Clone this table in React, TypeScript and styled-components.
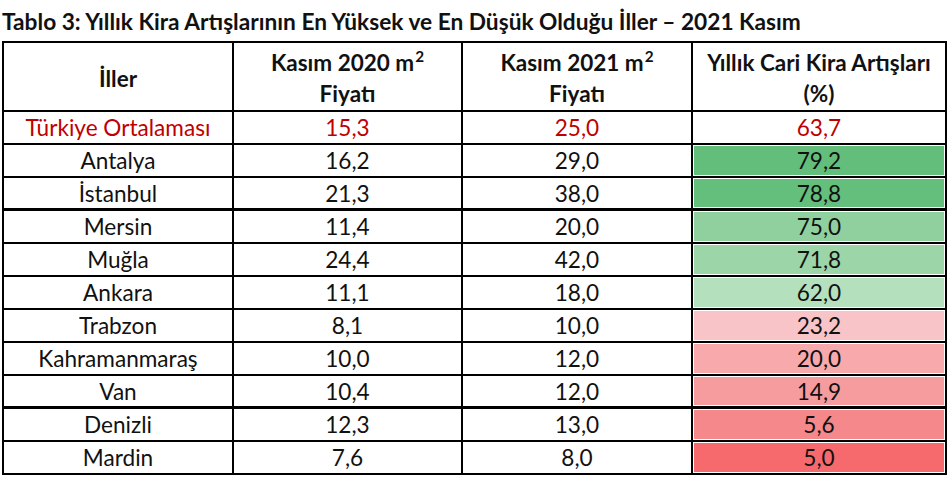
import React from "react";
import styled, { createGlobalStyle } from "styled-components";

const Global = createGlobalStyle`
  html, body { margin: 0; padding: 0; background: #ffffff; }
  body { font-family: "Lato", "Open Sans", sans-serif; color: #111; }
`;

const Page = styled.div`
  width: 947px;
  height: 477px;
  padding-left: 2px;
  box-sizing: border-box;
  overflow: hidden;
`;

const Title = styled.h1`
  margin: 0;
  height: 41px;
  display: flex;
  align-items: flex-end;
  padding-bottom: 7px;
  box-sizing: border-box;
  font-size: 22.7px;
  font-weight: 700;
  line-height: 1;
  color: #111;
  white-space: nowrap;
`;

const Table = styled.div`
  display: grid;
  grid-template-columns: 230px 229px 230px 254px;
  grid-template-rows: 69px repeat(11, 33px);
  border-left: 2px solid #000;
  border-top: 2px solid #000;
  width: 945px;
  box-sizing: border-box;
`;

const Cell = styled.div<{ $bg?: string; $red?: boolean; $thick?: boolean }>`
  box-sizing: border-box;
  border-right: 2px solid #000;
  border-bottom: ${(p) => (p.$thick ? "3px" : "2px")} solid #000;
  display: flex;
  align-items: center;
  justify-content: center;
  font-size: 22.6px;
  color: ${(p) => (p.$red ? "#c00000" : "#111")};
  background: ${(p) => p.$bg ?? "#fff"};
  background-clip: content-box;
  padding: ${(p) => (p.$bg ? "1px" : "0")};
  white-space: nowrap;
`;

const HeadCell = styled(Cell)`
  flex-direction: column;
  font-weight: 700;
  font-size: 22.5px;
  line-height: 31px;
  padding-top: 3px;
`;

const Sup = styled.sup`
  font-size: 0.68em;
  line-height: 0;
  vertical-align: 0.6em;
  margin-left: 1px;
`;

type Row = { name: string; a: string; b: string; c: string; bg?: string; red?: boolean; thick?: boolean };

const rows: Row[] = [
  { name: "Türkiye Ortalaması", a: "15,3", b: "25,0", c: "63,7", red: true },
  { name: "Antalya", a: "16,2", b: "29,0", c: "79,2", bg: "#63be7b" },
  { name: "İstanbul", a: "21,3", b: "38,0", c: "78,8", bg: "#64be7c", thick: true },
  { name: "Mersin", a: "11,4", b: "20,0", c: "75,0", bg: "#8fd09e" },
  { name: "Muğla", a: "24,4", b: "42,0", c: "71,8", bg: "#9bd5a8" },
  { name: "Ankara", a: "11,1", b: "18,0", c: "62,0", bg: "#b4e0be" },
  { name: "Trabzon", a: "8,1", b: "10,0", c: "23,2", bg: "#f8c4c7" },
  { name: "Kahramanmaraş", a: "10,0", b: "12,0", c: "20,0", bg: "#f7a9ac" },
  { name: "Van", a: "10,4", b: "12,0", c: "14,9", bg: "#f69c9f", thick: true },
  { name: "Denizli", a: "12,3", b: "13,0", c: "5,6", bg: "#f5888a" },
  { name: "Mardin", a: "7,6", b: "8,0", c: "5,0", bg: "#f66a6d" },
];

export default function App() {
  return (
    <Page>
      <Global />
      <Title>Tablo 3: Yıllık Kira Artışlarının En Yüksek ve En Düşük Olduğu İller – 2021 Kasım</Title>
      <Table>
        <HeadCell>
          <span>İller</span>
        </HeadCell>
        <HeadCell>
          <span>
            Kasım 2020 m<Sup>2</Sup>
          </span>
          <span>Fiyatı</span>
        </HeadCell>
        <HeadCell>
          <span>
            Kasım 2021 m<Sup>2</Sup>
          </span>
          <span>Fiyatı</span>
        </HeadCell>
        <HeadCell>
          <span>Yıllık Cari Kira Artışları</span>
          <span>(%)</span>
        </HeadCell>
        {rows.map((r) => (
          <React.Fragment key={r.name}>
            <Cell $red={r.red} $thick={r.thick}>{r.name}</Cell>
            <Cell $red={r.red} $thick={r.thick}>{r.a}</Cell>
            <Cell $red={r.red} $thick={r.thick}>{r.b}</Cell>
            <Cell $red={r.red} $thick={r.thick} $bg={r.bg}>{r.c}</Cell>
          </React.Fragment>
        ))}
      </Table>
    </Page>
  );
}
